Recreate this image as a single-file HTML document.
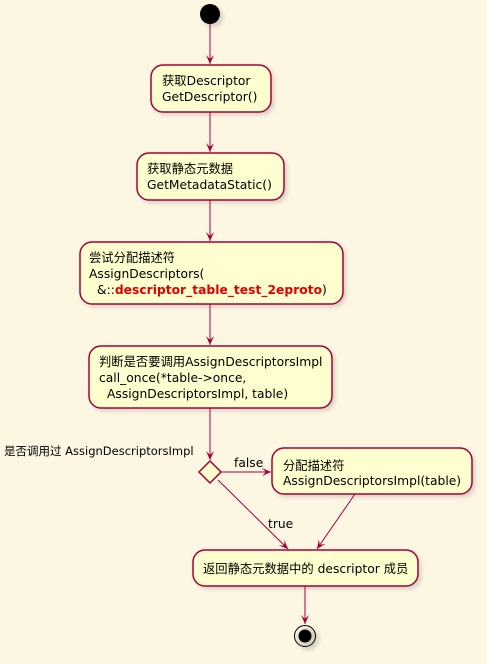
<!DOCTYPE html>
<html><head><meta charset="utf-8"><style>
html,body{margin:0;padding:0;background:#FDF6E3;}
svg{display:block}
text{font-family:"DejaVu Sans","Noto Sans CJK SC",sans-serif;font-size:12.3px;fill:#000}
</style></head><body>
<svg width="487" height="664" viewBox="0 0 487 664" xmlns="http://www.w3.org/2000/svg">
<defs>
<filter id="sh" x="-10%" y="-10%" width="130%" height="140%"><feGaussianBlur stdDeviation="2"/></filter>
<marker id="ar" markerWidth="10" markerHeight="10" refX="9" refY="5" orient="auto" markerUnits="userSpaceOnUse">
<path d="M0,1 L9,5 L0,9 L4,5 Z" fill="#A80036"/></marker>
</defs>
<rect width="487" height="664" fill="#FDF6E3"/>
<g fill="#888" opacity="0.35" filter="url(#sh)">
<circle cx="213" cy="17" r="10"/>
<rect x="154" y="68" width="120" height="47" rx="12"/>
<rect x="140" y="156" width="147" height="47" rx="12"/>
<rect x="83" y="245" width="263" height="62" rx="12"/>
<rect x="92" y="349" width="243" height="62" rx="12"/>
<rect x="275" y="451" width="200" height="46" rx="12"/>
<rect x="196" y="553" width="225" height="36" rx="12"/>
<circle cx="308" cy="639" r="11"/>
</g>
<circle cx="210" cy="14" r="10" fill="#000"/>
<g stroke="#A80036" stroke-width="1" fill="none">
<line x1="210" y1="24" x2="210" y2="64" marker-end="url(#ar)"/>
<line x1="210" y1="112" x2="210" y2="152" marker-end="url(#ar)"/>
<line x1="210" y1="200" x2="210" y2="241" marker-end="url(#ar)"/>
<line x1="210" y1="304" x2="210" y2="345" marker-end="url(#ar)"/>
<line x1="210" y1="408" x2="210" y2="460" marker-end="url(#ar)"/>
<line x1="221" y1="472" x2="271" y2="472" marker-end="url(#ar)"/>
<line x1="218" y1="480" x2="288" y2="549" marker-end="url(#ar)"/>
<line x1="355" y1="494" x2="317" y2="549" marker-end="url(#ar)"/>
<line x1="305" y1="586" x2="305" y2="624" marker-end="url(#ar)"/>
</g>
<g fill="#FEFECE" stroke="#A80036" stroke-width="1.5">
<rect x="151" y="65" width="120" height="47" rx="12"/>
<rect x="137" y="153" width="147" height="47" rx="12"/>
<rect x="80" y="242" width="263" height="62" rx="12"/>
<rect x="89" y="346" width="243" height="62" rx="12"/>
<path d="M210,461 L221,472 L210,483 L199,472 Z"/>
<rect x="272" y="448" width="200" height="46" rx="12"/>
<rect x="193" y="550" width="225" height="36" rx="12"/>
</g>
<circle cx="305" cy="636" r="10.5" fill="none" stroke="#000" stroke-width="1"/>
<circle cx="305" cy="636" r="6.5" fill="#000"/>
<text x="162" y="85">获取Descriptor</text>
<text x="162" y="101">GetDescriptor()</text>
<text x="147" y="173">获取静态元数据</text>
<text x="147" y="189">GetMetadataStatic()</text>
<text x="89" y="262">尝试分配描述符</text>
<text x="89" y="278">AssignDescriptors(</text>
<text x="97" y="294">&amp;::<tspan font-weight="bold" style="fill:#E00000">descriptor_table_test_2eproto</tspan>)</text>
<text x="99" y="366">判断是否要调用AssignDescriptorsImpl</text>
<text x="99" y="382">call_once(*table-&gt;once,</text>
<text x="107" y="398">AssignDescriptorsImpl, table)</text>
<text x="283" y="470">分配描述符</text>
<text x="283" y="485">AssignDescriptorsImpl(table)</text>
<text x="203" y="573">返回静态元数据中的 descriptor 成员</text>
<text x="4" y="455" style="font-size:11.5px">是否调用过 AssignDescriptorsImpl</text>
<text x="234" y="467">false</text>
<text x="268" y="528">true</text>
</svg>
</body></html>
